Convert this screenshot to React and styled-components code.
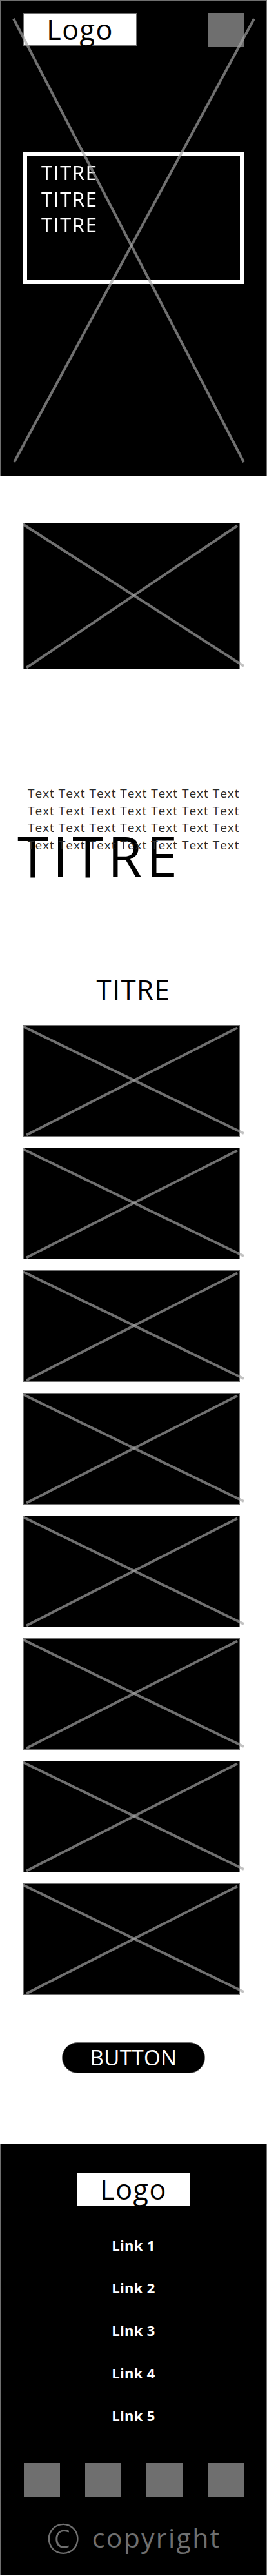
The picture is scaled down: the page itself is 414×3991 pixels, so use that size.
import React from "react";
import styled, { createGlobalStyle } from "styled-components";

const GREY = "#6f6f6f";
const LINE = "rgba(165, 165, 165, 0.68)";

const GlobalStyle = createGlobalStyle`
  * {
    box-sizing: border-box;
  }

  body {
    margin: 0;
    background: #fff;
    font-family: "Segoe UI", "Open Sans", "Noto Sans", sans-serif;
    -webkit-font-smoothing: antialiased;
  }
`;

const Page = styled.div`
  width: 414px;
  display: flex;
  flex-direction: column;
`;

const Hero = styled.header`
  position: relative;
  height: 738px;
  background: #000;
  border: 1px solid ${GREY};
  padding: 19px 35px 0;
`;

const TopBar = styled.div`
  display: flex;
  justify-content: space-between;
  align-items: flex-start;
`;

const LogoBox = styled.div`
  width: 176px;
  height: ${(p) => p.$h || 51}px;
  background: #fff;
  border: 1px solid ${GREY};
  display: flex;
  align-items: center;
  justify-content: center;
  font-size: 43px;
  line-height: 1;
  letter-spacing: 1.5px;
  color: #000;
`;

const MenuSquare = styled.div`
  width: 56px;
  height: 53px;
  background: ${GREY};
`;

const TitleBox = styled.div`
  margin-top: 163px;
  width: 342px;
  height: 204px;
  border: 6px solid #fff;
  padding: 5px 0 0 22px;
  color: #ffffff;
  font-size: 31px;
  line-height: 40.7px;
  letter-spacing: 1.7px;
  will-change: transform;
`;

const Cross = styled.svg`
  position: absolute;
  top: ${(p) => p.$inset}px;
  left: ${(p) => p.$inset}px;
  overflow: visible;
  pointer-events: none;
`;

const Frame = styled.div`
  position: relative;
  width: 336px;
  height: ${(p) => p.$h}px;
  margin-left: 36px;
  background: #000;
  border: 1px solid ${GREY};
`;

const ImageSection = styled.section`
  margin-top: 72px;
`;

const TextBlock = styled.p`
  position: relative;
  z-index: 1;
  margin: 179px 0 0;
  padding: 0 36px 0 43px;
  font-size: 19px;
  line-height: 26.7px;
  letter-spacing: 1px;
  color: #2b2b2b;
`;

const BigTitle = styled.h1`
  margin: -41px 0 0 27px;
  font-size: 87px;
  font-weight: 400;
  line-height: 87px;
  letter-spacing: 6.5px;
  color: #000;
`;

const SectionTitle = styled.h2`
  margin: 139px 0 0;
  font-size: 42px;
  font-weight: 400;
  line-height: 50px;
  letter-spacing: 1.5px;
  text-align: center;
  color: #000;
`;

const CardList = styled.div`
  margin-top: 30px;
  display: flex;
  flex-direction: column;
  gap: 17px;
`;

const Button = styled.button`
  align-self: center;
  margin-top: 73px;
  width: 222px;
  height: 48px;
  border-radius: 24px;
  border: 1px solid ${GREY};
  background: #000;
  color: #fff;
  font-family: inherit;
  font-size: 33px;
  line-height: 46px;
  letter-spacing: 0.5px;
  padding: 0;
`;

const Footer = styled.footer`
  margin-top: 109px;
  height: 669px;
  background: #000;
  border: 1px solid ${GREY};
  padding-top: 44px;
  display: flex;
  flex-direction: column;
  align-items: center;
`;

const LinkList = styled.ul`
  list-style: none;
  margin: 27px 0 0;
  padding: 0;
  text-align: center;
`;

const FooterLink = styled.li`
  color: #fff;
  font-size: 22px;
  font-weight: 700;
  line-height: 66px;
  letter-spacing: 0.3px;
`;

const SocialRow = styled.div`
  align-self: stretch;
  margin-top: 41px;
  padding: 0 35px 0 36px;
  display: flex;
  justify-content: space-between;
`;

const SocialSquare = styled.div`
  width: 56px;
  height: 52px;
  background: ${GREY};
`;

const Copyright = styled.div`
  margin-top: 36px;
  height: 56px;
  display: flex;
  align-items: center;
  gap: 18px;
  color: ${GREY};
`;

const CopySign = styled.span`
  font-size: 64px;
  font-weight: 300;
  line-height: 1;
`;

const CopyText = styled.span`
  font-size: 41px;
  line-height: 1;
  letter-spacing: 2.3px;
`;

const Placeholder = ({ h }) => {
  const w = 336;
  return (
    <Frame $h={h}>
      <Cross $inset={-1} width={w} height={h}>
        <line x1="0" y1="2.5" x2={w + 6} y2={h - 5} stroke={LINE} strokeWidth="4" />
        <line x1="5" y1={h - 2.5} x2={w - 4} y2="4.5" stroke={LINE} strokeWidth="4" />
      </Cross>
    </Frame>
  );
};

const words = Array.from({ length: 28 }, () => "Text").join(" ");

const App = () => {
  return (
    <Page>
      <GlobalStyle />
      <Hero>
        <TopBar>
          <LogoBox>Logo</LogoBox>
          <MenuSquare />
        </TopBar>
        <TitleBox>
          TITRE
          <br />
          TITRE
          <br />
          TITRE
        </TitleBox>
        <Cross $inset={0} width="412" height="736">
          <line x1="20" y1="28" x2="377" y2="715" stroke={LINE} strokeWidth="4" />
          <line x1="393" y1="28" x2="21" y2="715" stroke={LINE} strokeWidth="4" />
        </Cross>
      </Hero>

      <ImageSection>
        <Placeholder h={227} />
      </ImageSection>

      <TextBlock>{words}</TextBlock>
      <BigTitle>TITRE</BigTitle>

      <SectionTitle>TITRE</SectionTitle>
      <CardList>
        {Array.from({ length: 8 }, (_, i) => (
          <Placeholder key={i} h={173} />
        ))}
      </CardList>

      <Button>BUTTON</Button>

      <Footer>
        <LogoBox $h={52}>Logo</LogoBox>
        <LinkList>
          {[1, 2, 3, 4, 5].map((n) => (
            <FooterLink key={n}>Link {n}</FooterLink>
          ))}
        </LinkList>
        <SocialRow>
          <SocialSquare />
          <SocialSquare />
          <SocialSquare />
          <SocialSquare />
        </SocialRow>
        <Copyright>
          <CopySign>©</CopySign>
          <CopyText>copyright</CopyText>
        </Copyright>
      </Footer>
    </Page>
  );
};

export default App;
